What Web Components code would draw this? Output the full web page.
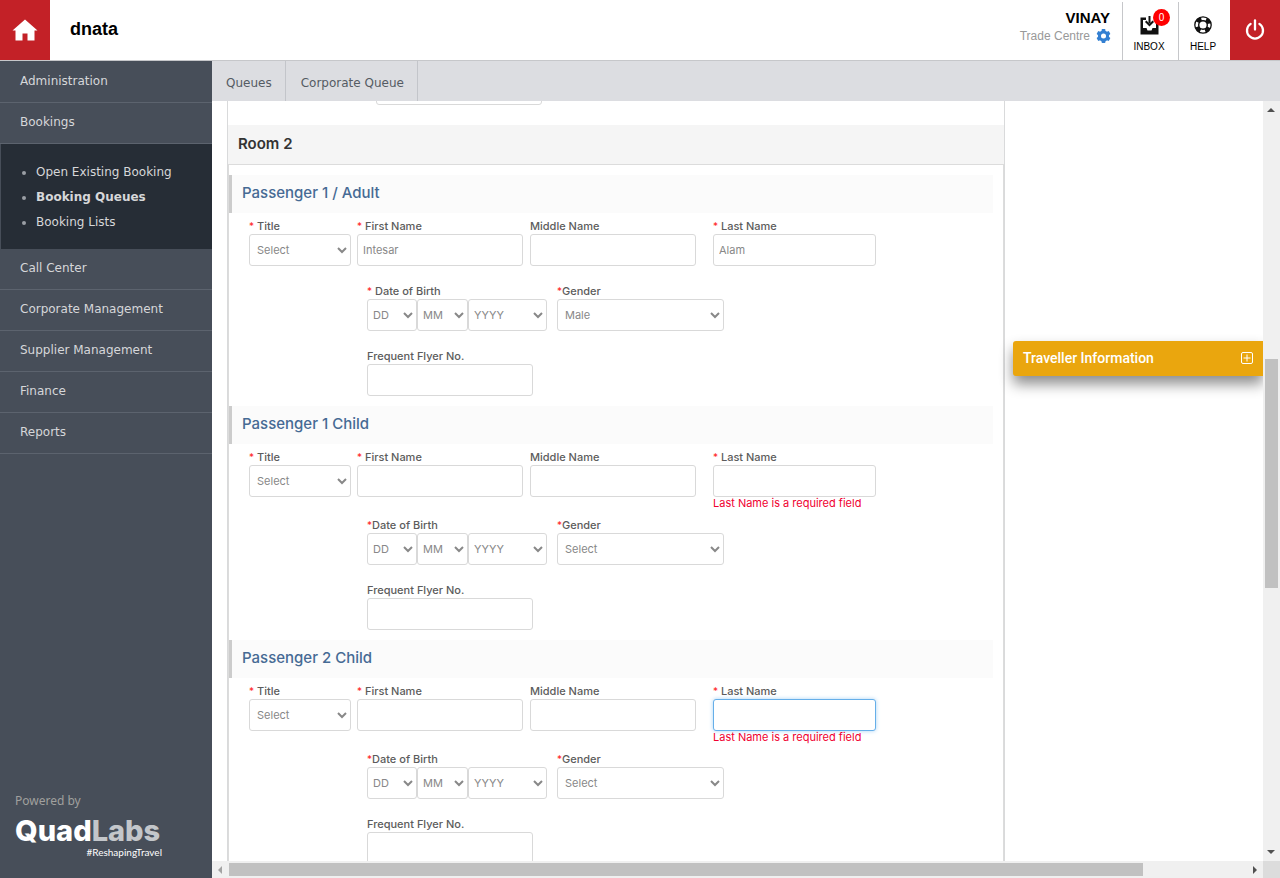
<!DOCTYPE html>
<html lang="en">
<head>
<meta charset="utf-8">
<title>dnata – Booking Queues</title>
<style>
  html, body { margin: 0; height: 100%; }
  body { font-family: "Liberation Sans", Arial, sans-serif; background: #fff; overflow: hidden; }
</style>
</head>
<body>
<booking-app></booking-app>
<script>
/* Registers an element; setup(host, content) fills the cloned template before it is shown. */
function define(name, html, setup) {
  const tpl = document.createElement('template');
  tpl.innerHTML = html;
  customElements.define(name, class extends HTMLElement {
    connectedCallback() {
      if (this.shadowRoot) return;
      const content = tpl.content.cloneNode(true);
      if (setup) setup(this, content);
      this.attachShadow({ mode: 'open' }).append(content);
    }
  });
}

/* ---------- header ---------- */
define('app-header', `
<style>
  :host { display: flex; height: 60px; background: #fff; border-bottom: 1px solid #c6c7ca; color: #000; flex: none; }
  a { color: inherit; text-decoration: none; }
  .home, .power { width: 50px; background: #c32127; display: flex; align-items: center; justify-content: center; border: 0; padding: 0; }
  h1 { margin: 0 auto 0 20px; font-size: 18px; line-height: 58px; font-weight: 700; }
  .user { text-align: right; padding: 9px 11px 0 0; }
  .name { font-size: 15px; line-height: 18px; font-weight: 700; margin-right: 1px; }
  .org { display: flex; align-items: center; gap: 6px; font-size: 12px; line-height: 18px; color: #999; }
  .tool { margin-top: 2px; border-left: 1px solid #c6c7ca; padding: 13px 3px 0 0; display: flex; flex-direction: column; align-items: center; gap: 5px; font-size: 10px; line-height: 14px; position: relative; width: 48px; }
  .inbox { width: 52px; }
  .badge { position: absolute; left: 30px; top: 7px; width: 17px; height: 17px; border-radius: 50%; background: #f00; color: #fff; font-size: 10px; line-height: 17px; text-align: center; }
  svg { display: block; }
</style>
<a class="home" href="#" aria-label="Home"><svg width="26" height="22" viewBox="0 0 26 22"><path fill="#fff" d="M13 0.5 25.500 11.500H22.500v10h-7V14.500h-5v7H3.500v-10H0.500z"/></svg></a>
<h1>dnata</h1>
<div class="user">
  <div class="name">VINAY</div>
  <div class="org"><span>Trade Centre</span><svg width="15" height="16" viewBox="0 0 16 16"><g fill="#3480d2"><circle cx="8" cy="8" r="6"/><rect x="6" y="0.500" width="4" height="15" rx="0.800"/><rect x="6" y="0.500" width="4" height="15" rx="0.800" transform="rotate(60 8 8)"/><rect x="6" y="0.500" width="4" height="15" rx="0.800" transform="rotate(120 8 8)"/></g><circle cx="8" cy="8" r="2.700" fill="#fff"/></svg></div>
</div>
<a class="tool inbox" href="#"><svg width="19" height="20" viewBox="0 0 19 20"><path fill="#111" d="M0.500 2.500H6V5H3v8h3.500l1 2.500h4l1-2.500H16V5h-1V2.500h3.500V19.500h-18z"/><path fill="#111" d="M8.500 1h2v7h-2z"/><path fill="none" stroke="#111" stroke-width="2" d="M5.700 6.200 9.500 10l3.800-3.800"/></svg><span>INBOX</span><span class="badge">0</span></a>
<a class="tool" href="#"><svg width="18" height="20" viewBox="0 0 18 20"><g fill="none" stroke="#111"><circle cx="9" cy="10" r="8.200" stroke-width="1.300"/><circle cx="9" cy="10" r="4.300" stroke-width="1.400"/><circle cx="9" cy="10" r="6.300" stroke-width="4" stroke-dasharray="4.950 4.950" stroke-dashoffset="-2.470"/></g></svg><span>HELP</span></a>
<button class="power" aria-label="Log out"><svg width="20" height="22" viewBox="0 0 20 22"><g fill="none" stroke="#fff" stroke-width="2.300" stroke-linecap="round"><path d="M5.600 4.900a8 8 0 1 0 8.800 0"/><path d="M10 1.500v9"/></g></svg></button>`);

/* ---------- side menu ---------- */
define('side-menu', `
<style>
  :host { display: flex; flex-direction: column; width: 212px; flex: none; background: #474e59; color: #d6d7d9; font: 12px/40px "DejaVu Sans", Verdana, sans-serif; }
  a { color: inherit; text-decoration: none; }
  ul { list-style: none; margin: 0; padding: 0; }
  .menu { padding-top: 1px; }
  .menu > li > a { display: block; height: 40px; line-height: 39px; padding-left: 20px; border-bottom: 1px solid #5c636e; }
  .sub { margin-left: 1px; padding: 16px 0 14px 35px; background: #262d36; line-height: 24px; }
  .sub li { position: relative; height: 25px; }
  .sub li::before { content: ""; position: absolute; left: -14px; top: 11px; width: 4px; height: 4px; border-radius: 50%; background: #9a9ea5; }
  .current { font-weight: 700; }
  .powered { margin-top: auto; padding: 0 0 20px 15px; width: 147px; }
  .by { font: 12px/18px "Noto Sans", sans-serif; color: #a0a09e; }
  .logo { font: 800 29px/28px Inter, sans-serif; color: #fff; margin-top: 7px; white-space: nowrap; }
  .logo span { color: #c3c6ca; }
  .tag { font: 10px/12px Lato, sans-serif; color: #fff; text-align: right; margin-top: 1px; }
</style>
<nav><ul class="menu">
  <li><a href="#">Administration</a></li>
  <li><a href="#">Bookings</a>
    <ul class="sub"><li><a href="#">Open Existing Booking</a></li><li><a class="current" href="#">Booking Queues</a></li><li><a href="#">Booking Lists</a></li></ul></li>
  <li><a href="#">Call Center</a></li>
  <li><a href="#">Corporate Management</a></li>
  <li><a href="#">Supplier Management</a></li>
  <li><a href="#">Finance</a></li>
  <li><a href="#">Reports</a></li>
</ul></nav>
<div class="powered"><div class="by">Powered by</div><div class="logo">Quad<span>Labs</span></div><div class="tag">#ReshapingTravel</div></div>`);

/* ---------- tabs ---------- */
define('tab-bar', `
<style>
  :host { display: flex; flex: none; height: 40px; background: #dcdde1; font: 12px/45px "DejaVu Sans", Verdana, sans-serif; color: #555b63; }
  a { height: 40px; color: inherit; text-decoration: none; padding: 0 13px 0 14px; border-right: 1px solid #c3c5ca; }
  a + a { padding-left: 15px; }
</style>
<a href="#">Queues</a><a href="#">Corporate Queue</a>`);

/* ---------- form fields ---------- */
const fieldStyle = `
  :host { display: block; width: 166px; font: 11px/16px Inter, sans-serif; color: #666; }
  label { display: block; font-weight: 500; color: #5c5c5c; white-space: pre; }
  label i { color: #f22; font-style: normal; font-size: 10px; font-weight: 400; }
  input, select { box-sizing: border-box; display: block; width: 100%; height: 32px; margin: 0; border: 1px solid #d9d9d9; border-radius: 3px; background-color: #fff; font: inherit; color: #888; outline: 0; }
  input { padding: 0 5px; }
  select { padding: 0 4px 0 3px; }
  .hint { min-height: var(--hint, 17px); }`;
const fillLabel = (host, root) => {
  const label = root.querySelector('label'), mark = host.getAttribute('mark');
  if (mark) { const i = document.createElement('i'); i.textContent = mark; label.append(i); }
  label.append(host.getAttribute('label'));
};

define('text-field', `
<style>${fieldStyle}
  :host([active]) input { border-color: #66afe9; box-shadow: 0 0 4px #a9d3f5; }
  .error { line-height: 13px; padding-bottom: 3px; color: #f00030; white-space: nowrap; }
</style>
<label for="c"></label><input id="c" type="text" autocomplete="off"><div class="hint"></div>`, (host, root) => {
  fillLabel(host, root);
  root.querySelector('input').setAttribute('value', host.getAttribute('value') || '');
  const error = host.getAttribute('error');
  if (error) { const h = root.querySelector('.hint'); h.textContent = error; h.classList.add('error'); }
});

define('select-field', `
<style>${fieldStyle}</style>
<label for="c"></label><select id="c"></select><div class="hint"></div>`, (host, root) => {
  fillLabel(host, root);
  const select = root.querySelector('select'), value = host.getAttribute('value');
  for (const o of host.getAttribute('options').split(',')) select.append(new Option(o, o, o === value, o === value));
});

define('date-field', `
<style>${fieldStyle}
  :host { width: 180px; }
  .parts { display: grid; grid-template-columns: 50px 51px 79px; }
  .parts select { padding: 0 2px 0 1px; }
</style>
<label for="d"></label>
<div class="parts">
  <select id="d"><option>DD</option></select>
  <select aria-label="Month of birth"><option>MM</option></select>
  <select aria-label="Year of birth"><option>YYYY</option></select>
</div><div class="hint"></div>`, fillLabel);

/* ---------- passenger ---------- */
define('passenger-form', `
<style>
  :host { display: block; }
  h3 { margin: 0 10px 5px 0; padding-left: 10px; border-left: 3px solid #ccc; background: #fbfbfb; font: 500 15px/36px Inter, sans-serif; height: 38px; color: #466a94; }
  .row { display: flex; padding-left: 138px; gap: 10px; }
  .names { padding-left: 20px; gap: 0; }
  .title { width: 102px; margin-right: 6px; }
  .first { margin-right: 7px; }
  .middle { margin-right: 17px; }
  .last { width: 163px; }
  .gender { width: 167px; }
  .flyer { --hint: 10px; }
</style>
<h3></h3>
<div class="row names">
  <select-field class="title" mark="*" label=" Title" options="Select,Mr,Mrs,Ms"></select-field>
  <text-field class="first" mark="*" label=" First Name"></text-field>
  <text-field class="middle" label="Middle Name"></text-field>
  <text-field class="last" mark="*" label=" Last Name"></text-field>
</div>
<div class="row">
  <date-field mark="*" label="Date of Birth"></date-field>
  <select-field class="gender" mark="*" label="Gender" options="Select,Male,Female"></select-field>
</div>
<div class="row flyer"><text-field label="Frequent Flyer No."></text-field></div>`, (host, root) => {
  root.querySelector('h3').textContent = host.getAttribute('heading');
  const pass = (sel, attr, v) => { if (v) root.querySelector(sel).setAttribute(attr, v); };
  pass('.first', 'value', host.getAttribute('first'));
  pass('.last', 'value', host.getAttribute('last'));
  pass('.last', 'error', host.getAttribute('error'));
  pass('.last', 'active', host.hasAttribute('editing'));
  pass('.gender', 'value', host.getAttribute('gender'));
  pass('date-field', 'label', host.hasAttribute('adult') && ' Date of Birth');
});

/* ---------- room panel ---------- */
define('room-panel', `
<style>
  :host { display: block; flex: 1; border: solid #d9dadb; border-width: 0 1px; }
  .previous { display: flex; padding-left: 148px; margin-top: -28px; }
  input { box-sizing: border-box; width: 166px; height: 32px; border: 1px solid #d9d9d9; border-radius: 3px; }
  h2 { margin: 20px 0 0; height: 39px; padding-left: 10px; background: #f5f5f5; border-bottom: 1px solid #dcdcdc; font: 600 15px/38px Inter, sans-serif; color: #333; }
  .body { border: solid #dcdcdc; border-width: 0 1px; padding-top: 10px; }
</style>
<div class="previous"><input type="text" aria-label="Frequent Flyer No."></div>
<h2>Room 2</h2>
<div class="body"><slot></slot></div>`);

/* ---------- traveller information ---------- */
define('traveller-info', `
<style>
  :host { display: block; flex: none; width: 250px; margin: 240px 0 0 8px; }
  button { display: flex; align-items: center; justify-content: space-between; width: 100%; height: 35px; padding: 0 10px 1px; border: 0; border-radius: 3px 0 0 3px; background: #eaa60e; color: #fff; font: 500 14px/20px Roboto, sans-serif; box-shadow: 0 8px 14px rgba(0,0,0,.45); }
</style>
<button><span>Traveller Information</span><svg width="12" height="12" viewBox="0 0 12 12"><g fill="none" stroke="#fff"><rect x="0.500" y="0.500" width="11" height="11" rx="1.500"/><path d="M6 2.500v7M2.500 6h7"/></g></svg></button>`);

/* ---------- scroll frame with its bars ---------- */
define('scroll-frame', `
<style>
  :host { display: grid; grid-template: minmax(0, 1fr) 17px / minmax(0, 1fr) 17px; flex: 1; min-height: 0; }
  .view { overflow: hidden; display: flex; align-items: flex-start; padding-left: 15px; }
  .bar { background: #f0f0f0; display: flex; align-items: center; }
  .v { flex-direction: column; }
  .arrow { flex: none; width: 17px; height: 17px; display: block; }
  .thumb { background: #c1c1c1; }
  .v .thumb { width: 13px; flex: 229; }
  .h .thumb { height: 13px; flex: 914; }
  .corner { background: #dcdcdc; }
</style>
<div class="view"><slot></slot></div>
<div class="bar v" aria-hidden="true"><svg class="arrow"><path fill="#505050" d="M4 11h8L8 7z"/></svg><i style="flex:241"></i><i class="thumb"></i><i style="flex:256"></i><svg class="arrow"><path fill="#505050" d="M4 6h8l-4 4z"/></svg></div>
<div class="bar h" aria-hidden="true"><svg class="arrow"><path fill="#a3a3a3" d="M10 5v8L6 9z"/></svg><i class="thumb"></i><i style="flex:103"></i><svg class="arrow"><path fill="#505050" d="M7 5v8l4-4z"/></svg></div>
<div class="corner"></div>`);

/* ---------- whole application ---------- */
define('booking-app', `
<style>
  :host { display: flex; flex-direction: column; height: 100vh; }
  .body { display: flex; flex: 1; min-height: 0; }
  main { display: flex; flex-direction: column; flex: 1; min-width: 0; }
</style>
<app-header></app-header>
<div class="body">
  <side-menu></side-menu>
  <main>
    <tab-bar></tab-bar>
    <scroll-frame>
      <room-panel>
        <passenger-form adult heading="Passenger 1 / Adult" first="Intesar" last="Alam" gender="Male"></passenger-form>
        <passenger-form heading="Passenger 1 Child" error="Last Name is a required field"></passenger-form>
        <passenger-form heading="Passenger 2 Child" error="Last Name is a required field" editing></passenger-form>
      </room-panel>
      <traveller-info></traveller-info>
    </scroll-frame>
  </main>
</div>`);
</script>
</body>
</html>
